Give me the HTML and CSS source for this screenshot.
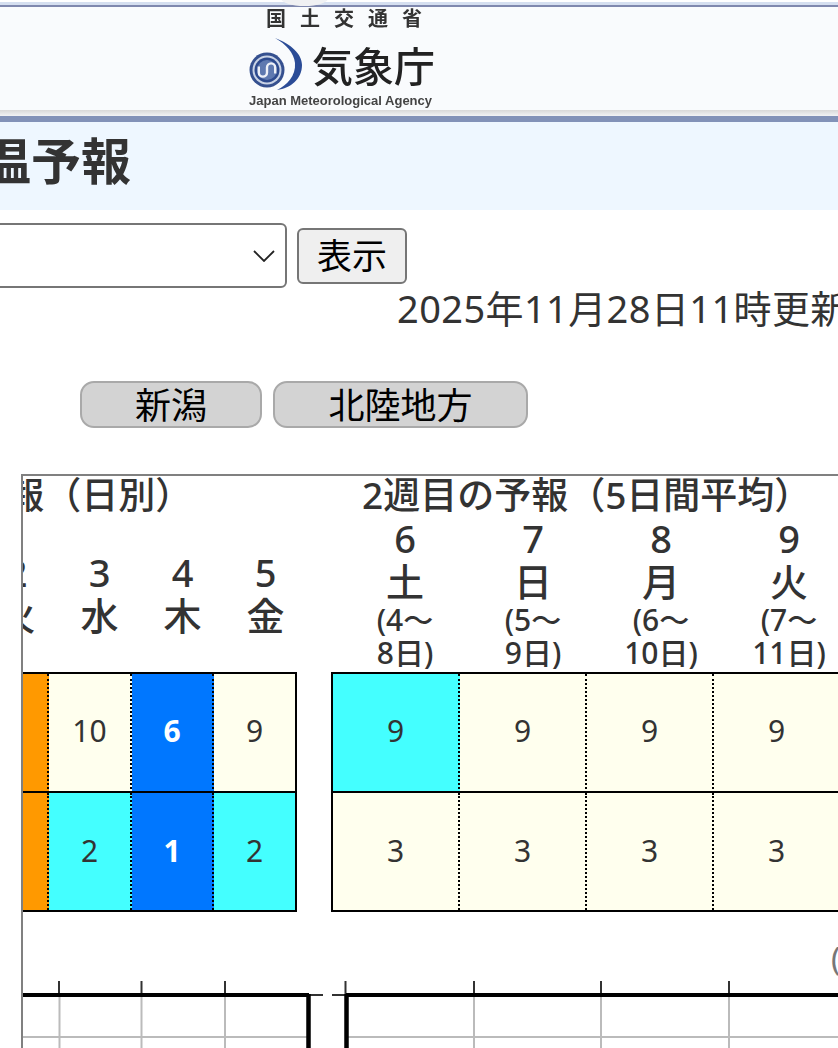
FILE: index.html
```html
<!DOCTYPE html>
<html lang="ja">
<head>
<meta charset="utf-8">
<title>気温予報</title>
<link rel="stylesheet" href="styles.css">
</head>
<body>
<header class="site-header">
  <div class="strip-light"></div>
  <div class="strip-dark"></div>
  <span class="notch"></span>
  <div class="logo">
    <div class="ministry"><span>国</span><span>土</span><span>交</span><span>通</span><span>省</span></div>
    <div class="agency">
      <svg class="mark" viewBox="0 0 54 56" width="54" height="56" aria-hidden="true">
        <circle cx="18" cy="34" r="17.500" fill="#35508f"/>
        <circle cx="18" cy="34" r="14.500" fill="#c9d3e6"/>
        <circle cx="18" cy="34" r="12.500" fill="#2d4a8e"/>
        <circle cx="18" cy="34" r="10" fill="#5f79b0"/>
        <path d="M9.800 30.500V36.500A4.100 4.100 0 0 0 18 36.500V31.500A4.100 4.100 0 0 1 26.200 31.500V37.500" fill="none" stroke="#eef1f8" stroke-width="2.400"/>
        <path d="M26 2C42 8 53 18 53 29C53 43 42 52 28 54C38 49 47 40 46 27C45 17 37 8 26 2Z" fill="#2b4c97"/>
      </svg>
      <span class="agency-name">気象庁</span>
    </div>
    <div class="agency-en">Japan Meteorological Agency</div>
  </div>
  <div class="strip-fade"></div>
  <div class="strip-blue"></div>
</header>

<div class="title-bar"><h1>気温予報</h1></div>

<form class="controls">
  <div class="select-box">
    <select class="area-select" aria-label="地域"><option></option></select>
    <svg class="chevron" viewBox="0 0 22 12" width="22" height="12" aria-hidden="true"><path d="M1 1L11 11L21 1" fill="none" stroke="#222" stroke-width="1.800"/></svg>
  </div>
  <button type="button" class="show-btn">表示</button>
</form>

<p class="updated">2025年11月28日11時更新</p>

<nav class="links">
  <a class="pill pill-a">新潟</a>
  <a class="pill pill-b">北陸地方</a>
</nav>

<main class="frame">
  <div class="panels">
    <section class="panel panel-a">
      <h2 class="panel-title title-a">1週目の予報（日別）</h2>
      <div class="days days-a">
        <div class="day"><b>2</b><b>火</b></div>
        <div class="day"><b>3</b><b>水</b></div>
        <div class="day"><b>4</b><b>木</b></div>
        <div class="day"><b>5</b><b>金</b></div>
      </div>
      <div class="grid grid-a">
        <div class="cell orange"></div><div class="cell cream">10</div><div class="cell blue">6</div><div class="cell cream last">9</div>
        <div class="cell orange low"></div><div class="cell cyan low">2</div><div class="cell blue low">1</div><div class="cell cyan low last">2</div>
      </div>
    </section>
    <section class="panel panel-b">
      <h2 class="panel-title title-b">2週目の予報（5日間平均）</h2>
      <div class="days days-b">
        <div class="day"><b>6</b><b>土</b><small>(4～</small><small>8日)</small></div>
        <div class="day"><b>7</b><b>日</b><small>(5～</small><small>9日)</small></div>
        <div class="day"><b>8</b><b>月</b><small>(6～</small><small>10日)</small></div>
        <div class="day"><b>9</b><b>火</b><small>(7～</small><small>11日)</small></div>
      </div>
      <div class="grid grid-b">
        <div class="cell cyan">9</div><div class="cell cream">9</div><div class="cell cream">9</div><div class="cell cream">9</div>
        <div class="cell cream low">3</div><div class="cell cream low">3</div><div class="cell cream low">3</div><div class="cell cream low">3</div>
      </div>
    </section>
  </div>
  <svg class="chart" viewBox="23 940 815 108" width="815" height="108" aria-hidden="true">
    <defs><filter id="soft" x="-5%" y="-5%" width="110%" height="110%"><feGaussianBlur stdDeviation="0.7"/></filter></defs>
    <g filter="url(#soft)">
      <g stroke="#bbb" stroke-width="2">
        <path d="M59.500 995V1048M141.500 995V1048M225 995V1048M474 995V1048M601 995V1048M729 995V1048"/>
        <path d="M23 1037H308M346 1037H838"/>
      </g>
      <g stroke="#333" stroke-width="2">
        <path d="M59 981V995M141.500 981V995M225 981V995M345.500 981V995M474 981V995M601 981V995M729 981V995"/>
        <path d="M309 995H323M332 995H346"/>
      </g>
      <g stroke="#000" stroke-width="4">
        <path d="M23 995H309M346 995H838"/>
      </g>
      <g stroke="#000" stroke-width="4.500">
        <path d="M308.500 994V1048M346.500 994V1048"/>
      </g>
    </g>
    <text class="chart-paren" x="831" y="971">(</text>
  </svg>
</main>
</body>
</html>
```

FILE: styles.css
```css
* { box-sizing: border-box; }
html, body { margin: 0; padding: 0; }
body {
  width: 838px;
  height: 1048px;
  overflow: hidden;
  background: #fff;
  color: #333;
  font-family: "Noto Sans", "Noto Sans CJK JP", sans-serif;
}

/* header */
.site-header {
  position: relative;
  height: 122px;
  padding-top: 2px;
  background: #f9fbfd;
  overflow: hidden;
}
.site-header::before {
  content: "";
  position: absolute;
  left: 0;
  right: 0;
  top: 0;
  height: 2px;
  background: #fff;
}
.strip-light { height: 3px; background: #d5dff0; }
.strip-dark { height: 2px; background: #7f88ae; }
.notch {
  position: absolute;
  left: 281px;
  top: -9px;
  width: 47px;
  height: 15px;
  border-radius: 50%;
  background: #f0f1f3;
}
.logo {
  height: 103px;
  margin-left: 249px;
  width: 190px;
  filter: blur(0.4px);
}
.ministry {
  display: flex;
  gap: 14px;
  margin-left: 17px;
  height: 24px;
  font-size: 20px;
  line-height: 24px;
  font-weight: 700;
  color: #333;
}
.agency {
  display: flex;
  align-items: center;
  height: 56px;
  margin-top: 2px;
}
.mark { flex: none; margin-top: 6px; }
.agency-name {
  margin-left: 9px;
  margin-top: 6px;
  font-size: 41px;
  line-height: 56px;
  font-family: "Noto Sans CJK JP", sans-serif;
  font-weight: 500;
  color: #222;
}
.agency-en {
  font-family: "Liberation Sans", sans-serif;
  font-size: 13px;
  font-weight: 700;
  line-height: 18px;
  margin-top: 3px;
  color: #444;
  white-space: nowrap;
}
.strip-fade { height: 6px; background: linear-gradient(#d8d8d8, #f2f3f5); }
.strip-blue { height: 6px; background: #8292b8; }

/* title */
.title-bar { height: 88px; background: #eef7ff; }
.title-bar h1 {
  margin: 0 0 0 -69px;
  font-size: 50px;
  line-height: 78px;
  font-weight: 700;
  color: #333;
  white-space: nowrap;
}

/* form */
.controls {
  display: flex;
  align-items: center;
  gap: 10px;
  margin: 13px 0 0 -20px;
}
.select-box { position: relative; }
.area-select {
  display: block;
  width: 307px;
  height: 65px;
  appearance: none;
  background: #fff;
  border: 2px solid #767676;
  border-radius: 6px;
}
.chevron { position: absolute; right: 12px; top: 27px; }
.show-btn {
  width: 110px;
  height: 56px;
  padding: 0 0 5px;
  background: #efefef;
  border: 2px solid #767676;
  border-radius: 6px;
  color: #000;
  font: 400 35px/1 "Noto Sans CJK JP", sans-serif;
}

.updated {
  margin: 0 0 0 397px;
  height: 46px;
  font-size: 38px;
  line-height: 40px;
  letter-spacing: 0.4px;
  white-space: nowrap;
  color: #333;
}

/* links */
.links {
  display: flex;
  gap: 11px;
  margin: 47px 0 0 80px;
}
.pill {
  display: block;
  height: 47px;
  background: #d3d3d3;
  border: 2px solid #a9a9a9;
  border-radius: 14px;
  color: #000;
  font: 400 36px/40px "Noto Sans CJK JP", sans-serif;
  text-align: center;
}
.pill-a { width: 182px; }
.pill-b { width: 255px; }

/* frame */
.frame {
  margin: 46px 0 0 21px;
  width: 817px;
  height: 574px;
  border-top: 2px solid #808080;
  border-left: 2px solid #808080;
  overflow: hidden;
}
.panels { display: flex; gap: 34px; margin-left: -60px; }
.panel { flex: none; }
.panel-a { width: 334px; }
.panel-b { width: 600px; }
.panel-title {
  margin: 0 0 6px;
  height: 38px;
  font-size: 37px;
  line-height: 38px;
  font-weight: 500;
  white-space: nowrap;
  color: #333;
}
.title-a { margin-left: -125px; }
.title-b { margin-left: 31px; }
.days {
  display: grid;
  height: 152px;
}
.days-a {
  grid-template-columns: repeat(4, 83px);
  align-items: center;
  padding: 0 0 4px 12px;
}
.days-b {
  grid-template-columns: repeat(4, 128px);
  align-items: start;
  height: 155px;
  margin-top: -3px;
  padding-left: 10px;
}
.day { display: flex; flex-direction: column; align-items: center; }
.day b { font-size: 38px; line-height: 43px; font-weight: 500; }
.day small { font-size: 30px; line-height: 33px; font-weight: 500; }

.grid {
  display: grid;
  grid-template-rows: 119px 117px;
  height: 240px;
  border: 2px solid #000;
}
.grid-a { grid-template-columns: 84px 83px 82px 81px; width: 334px; }
.grid-b { grid-template-columns: repeat(4, 127px); width: 512px; border-right: 0; }
.cell {
  display: flex;
  align-items: center;
  justify-content: center;
  padding-bottom: 4px;
  font-size: 30px;
  border-right: 2px dotted #000;
  border-bottom: 2px solid #000;
}
.low { border-bottom: 0; padding-bottom: 2px; }
.last { border-right: 0; }
.cream { background: #ffffee; }
.cyan { background: #44ffff; }
.orange { background: #ff9900; }
.blue { background: #0077ff; color: #fff; font-weight: 700; }

.chart { display: block; margin-top: 28px; }
.chart-paren { font-size: 32px; fill: #777; font-family: "Noto Sans", sans-serif; }
```
